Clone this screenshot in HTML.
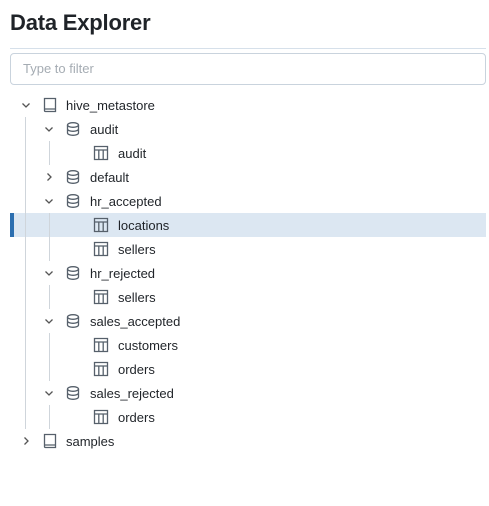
<!DOCTYPE html><html><head><style>
body{margin:0;width:489px;height:506px;background:#fff;font-family:"Liberation Sans",sans-serif;position:relative;overflow:hidden;color:#1f2328}
.t{position:absolute;left:10px;top:10px;font-size:22px;font-weight:bold;letter-spacing:-0.2px}
.hr{position:absolute;left:10px;top:48px;width:476px;height:1px;background:#d6e0ea}
.in{position:absolute;left:10px;top:53px;width:474px;height:30px;border:1px solid #c9d3dd;border-radius:4px;font-size:13px;color:#a5acb3;line-height:30px;box-sizing:content-box}
.in span{margin-left:12px}
.sel{position:absolute;left:10px;top:213px;width:476px;height:24px;background:#dce7f2}
.bar{position:absolute;left:10px;top:213px;width:4px;height:24px;background:#2c6fb0}
.r{position:absolute;height:24px;line-height:25px;font-size:13px;white-space:nowrap}
.r svg{position:absolute;top:4px}
.v{position:absolute;width:1px;background:#cfd5db}
</style></head><body>
<div class="t">Data Explorer</div>
<div class="hr"></div>
<div class="in"><span>Type to filter</span></div>
<div class="sel"></div><div class="bar"></div>
<div class="v" style="left:25px;top:117px;height:312px"></div>
<div class="v" style="left:49px;top:141px;height:24px"></div>
<div class="v" style="left:49px;top:213px;height:48px"></div>
<div class="v" style="left:49px;top:285px;height:24px"></div>
<div class="v" style="left:49px;top:333px;height:48px"></div>
<div class="v" style="left:49px;top:405px;height:24px"></div>
<svg width="0" height="0" style="position:absolute"><defs>
<symbol id="dn" viewBox="0 0 16 16"><path d="M4.5 6.5 8 10l3.5-3.5" fill="none" stroke="#555" stroke-width="1.3"/></symbol>
<symbol id="rt" viewBox="0 0 16 16"><path d="M6.5 4.5 10 8l-3.5 3.5" fill="none" stroke="#555" stroke-width="1.3"/></symbol>
<symbol id="bk" viewBox="0 0 16 16"><path d="M2.5 1.5h11v13h-10a1 1 0 0 1-1-1zM2.5 12h11" fill="none" stroke="#56606b" stroke-width="1.3"/></symbol>
<symbol id="db" viewBox="0 0 16 16"><ellipse cx="8" cy="4" rx="5.5" ry="2.3" fill="none" stroke="#56606b" stroke-width="1.3"/><path d="M2.5 4v8c0 1.3 2.5 2.3 5.5 2.3s5.5-1 5.5-2.3v-8M2.5 8c0 1.3 2.5 2.3 5.5 2.3s5.5-1 5.5-2.3" fill="none" stroke="#56606b" stroke-width="1.3"/></symbol>
<symbol id="tb" viewBox="0 0 16 16"><path d="M1.5 1.5h13v13h-13zM1.5 5h13M5.8 5v9.5M10.2 5v9.5" fill="none" stroke="#56606b" stroke-width="1.3"/></symbol>
</defs></svg>
<div class="r" style="top:93px;left:19px"><svg width="16" height="16" style="left:-1px"><use href="#dn"/></svg><svg width="16" height="16" style="left:23px"><use href="#bk"/></svg><span style="margin-left:47px">hive_metastore</span></div>
<div class="r" style="top:117px;left:42px"><svg width="16" height="16" style="left:-1px"><use href="#dn"/></svg><svg width="16" height="16" style="left:23px"><use href="#db"/></svg><span style="margin-left:48px">audit</span></div>
<div class="r" style="top:141px;left:93px"><svg width="16" height="16"><use href="#tb"/></svg><span style="margin-left:25px">audit</span></div>
<div class="r" style="top:165px;left:42px"><svg width="16" height="16" style="left:-1px"><use href="#rt"/></svg><svg width="16" height="16" style="left:23px"><use href="#db"/></svg><span style="margin-left:48px">default</span></div>
<div class="r" style="top:189px;left:42px"><svg width="16" height="16" style="left:-1px"><use href="#dn"/></svg><svg width="16" height="16" style="left:23px"><use href="#db"/></svg><span style="margin-left:48px">hr_accepted</span></div>
<div class="r" style="top:213px;left:93px"><svg width="16" height="16"><use href="#tb"/></svg><span style="margin-left:25px">locations</span></div>
<div class="r" style="top:237px;left:93px"><svg width="16" height="16"><use href="#tb"/></svg><span style="margin-left:25px">sellers</span></div>
<div class="r" style="top:261px;left:42px"><svg width="16" height="16" style="left:-1px"><use href="#dn"/></svg><svg width="16" height="16" style="left:23px"><use href="#db"/></svg><span style="margin-left:48px">hr_rejected</span></div>
<div class="r" style="top:285px;left:93px"><svg width="16" height="16"><use href="#tb"/></svg><span style="margin-left:25px">sellers</span></div>
<div class="r" style="top:309px;left:42px"><svg width="16" height="16" style="left:-1px"><use href="#dn"/></svg><svg width="16" height="16" style="left:23px"><use href="#db"/></svg><span style="margin-left:48px">sales_accepted</span></div>
<div class="r" style="top:333px;left:93px"><svg width="16" height="16"><use href="#tb"/></svg><span style="margin-left:25px">customers</span></div>
<div class="r" style="top:357px;left:93px"><svg width="16" height="16"><use href="#tb"/></svg><span style="margin-left:25px">orders</span></div>
<div class="r" style="top:381px;left:42px"><svg width="16" height="16" style="left:-1px"><use href="#dn"/></svg><svg width="16" height="16" style="left:23px"><use href="#db"/></svg><span style="margin-left:48px">sales_rejected</span></div>
<div class="r" style="top:405px;left:93px"><svg width="16" height="16"><use href="#tb"/></svg><span style="margin-left:25px">orders</span></div>
<div class="r" style="top:429px;left:19px"><svg width="16" height="16" style="left:-1px"><use href="#rt"/></svg><svg width="16" height="16" style="left:23px"><use href="#bk"/></svg><span style="margin-left:47px">samples</span></div>
</body></html>
